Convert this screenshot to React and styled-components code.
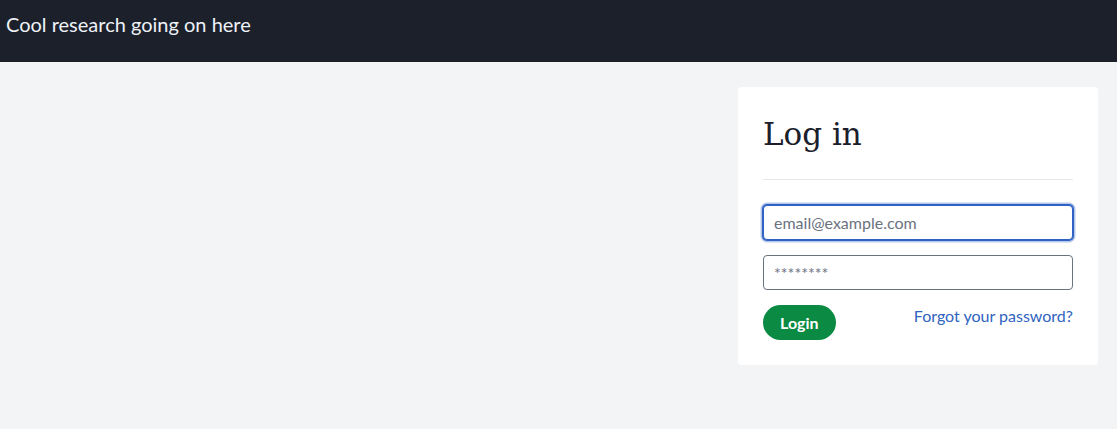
import React from "react";
import styled, { createGlobalStyle } from "styled-components";

const Global = createGlobalStyle`
  html, body { margin: 0; padding: 0; background: #f3f4f6; }
  body { font-family: Lato, "Noto Sans", sans-serif; }
  * { box-sizing: border-box; }
`;

const Header = styled.header`
  height: 62px;
  background: #1b202b;
  color: #eef2f7;
  display: flex;
  align-items: flex-start;
  padding: 12px 7px 0 6px;
  font-size: 20px;
  line-height: 24px;
`;

const Main = styled.main`
  display: flex;
  justify-content: flex-end;
  padding: 25px 19px 0 0;
`;

const Card = styled.section`
  width: 360px;
  background: #ffffff;
  border-radius: 4px;
  padding: 25px 25px 25px;
`;

const Title = styled.h1`
  margin: 0;
  font-family: "DejaVu Serif", "Liberation Serif", serif;
  font-weight: 400;
  font-size: 31px;
  line-height: 45px;
  color: #1b202b;
  padding-bottom: 22px;
  border-bottom: 1px solid #e5e7eb;
`;

const Form = styled.form`
  display: flex;
  flex-direction: column;
  gap: 15px;
  margin-top: 25px;
`;

const Input = styled.input`
  width: 100%;
  height: 35px;
  border: 1px solid #6b7280;
  border-radius: 4px;
  padding: 0 10px;
  font-family: Lato, "Noto Sans", sans-serif;
  font-size: 16px;
  color: #1b202b;
  outline: none;
  background: #fff;
  &::placeholder { color: #6b7280; }
  ${(p) => p.$focused && `
    border-color: #2f62c4;
    box-shadow: 0 0 0 1px #2f62c4, 0 0 0 2.5px rgba(47,98,196,0.35);
  `}
`;

const Row = styled.div`
  display: flex;
  justify-content: space-between;
  align-items: flex-start;
`;

const Button = styled.button`
  height: 35px;
  padding: 0 17px;
  border: none;
  border-radius: 18px;
  background: #0b8a43;
  color: #fff;
  font-family: Lato, "Noto Sans", sans-serif;
  font-weight: 700;
  font-size: 16px;
`;

const Link = styled.a`
  color: #2f63c0;
  font-size: 16px;
  line-height: 22px;
  text-decoration: none;
`;

export default function App() {
  return (
    <>
      <Global />
      <Header>Cool research going on here</Header>
      <Main>
        <Card>
          <Title>Log in</Title>
          <Form onSubmit={(e) => e.preventDefault()}>
            <Input $focused type="email" placeholder="email@example.com" autoFocus />
            <Input type="password" placeholder="********" />
            <Row>
              <Button type="submit">Login</Button>
              <Link href="#">Forgot your password?</Link>
            </Row>
          </Form>
        </Card>
      </Main>
    </>
  );
}
